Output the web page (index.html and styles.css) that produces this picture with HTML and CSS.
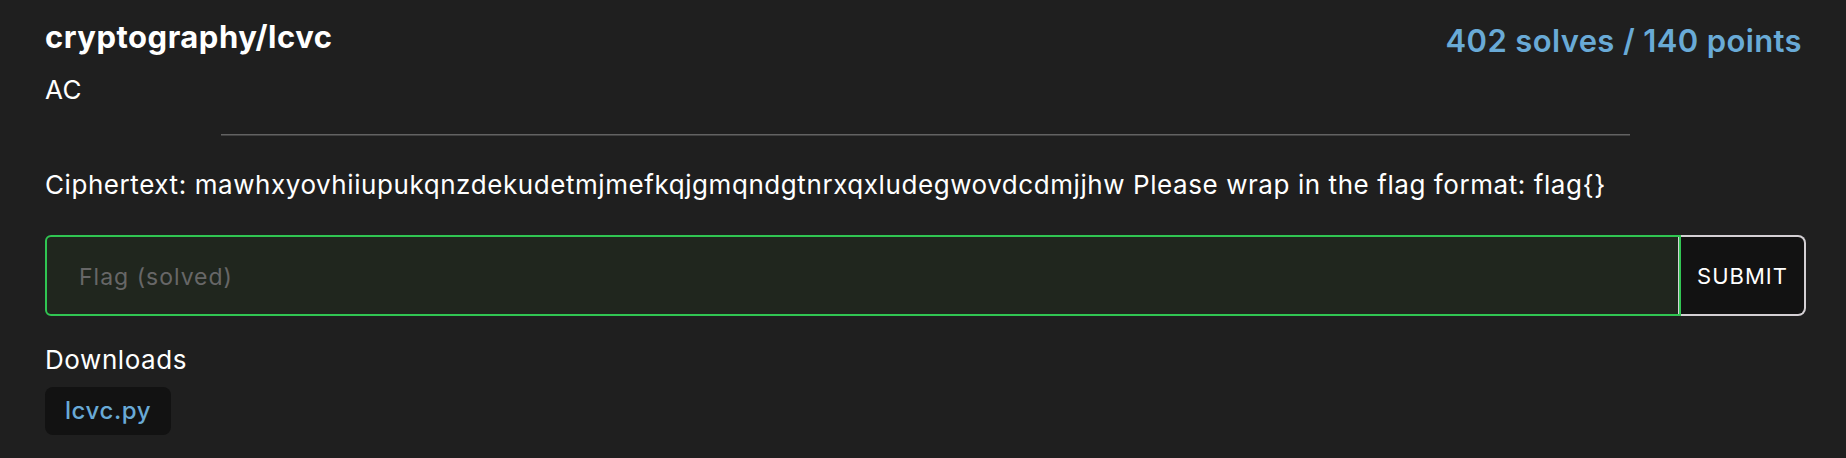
FILE: index.html
```html
<!DOCTYPE html>
<html lang="en">
<head>
<meta charset="utf-8">
<title>cryptography/lcvc</title>
<link rel="stylesheet" href="styles.css">
</head>
<body>
<main class="problem">
  <header class="header">
    <div>
      <h1 class="title">cryptography/lcvc</h1>
      <p class="author">AC</p>
    </div>
    <a class="points" href="#solves">402 solves / 140 points</a>
  </header>
  <hr class="divider">
  <p class="description">Ciphertext: mawhxyovhiiupukqnzdekudetmjmefkqjgmqndgtnrxqxludegwovdcdmjjhw Please wrap in the flag format: flag{}</p>
  <form class="flag-form">
    <input class="flag-input" type="text" aria-label="Flag" placeholder="Flag (solved)">
    <button class="submit" type="button">SUBMIT</button>
  </form>
  <section>
    <h2 class="downloads-title">Downloads</h2>
    <a class="file" href="#lcvc.py">lcvc.py</a>
  </section>
</main>
</body>
</html>
```
FILE: styles.css
```css
* { box-sizing: border-box; }
body {
  margin: 0;
  background: #1f1f1f;
  color: #fff;
  font-family: Inter, sans-serif;
  font-size: 26px;
  letter-spacing: 0.022em;
  line-height: 40px;
}
.problem { padding: 18px 40px 22px 45px; }
.header { display: flex; justify-content: space-between; align-items: flex-start; }
.title { margin: 0; font-size: 31px; font-weight: 700; line-height: 38px; letter-spacing: 0.016em; }
.author { margin: 14px 0 0; }
.points { margin: 3px 4px 0 0; color: #69aad6; font-size: 31px; font-weight: 600; letter-spacing: 0.012em; text-decoration: none; }
.divider { width: 80%; height: 2px; margin: 24px auto 29px; border: 0; border-top: 1px solid #626262; background: #414141; }
.description { margin: 0; }
.flag-form { display: flex; height: 81px; margin: 30px 0 24px; }
.flag-input {
  flex: 1;
  min-width: 0;
  padding: 2px 32px 0;
  border: 2px solid #30c552;
  border-radius: 6px 0 0 6px;
  background: #20261e;
  box-shadow: inset -1px 0 #d4d0d4;
  color: #fff;
  font: inherit;
  font-size: 23px;
  letter-spacing: 1px;
}
.flag-input::placeholder { color: #676767; opacity: 1; }
.submit {
  width: 125px;
  padding: 0;
  border: 2px solid #d4d0d4;
  border-left: 0;
  border-radius: 0 8px 8px 0;
  background: #121212;
  color: #fff;
  font: inherit;
  font-size: 22px;
  letter-spacing: 1px;
}
.downloads-title { margin: 0 0 7px; font-size: 26px; font-weight: 400; }
.file {
  display: inline-block;
  padding: 4px 20px;
  border-radius: 8px;
  background: #121212;
  color: #69aad6;
  font-size: 24px;
  font-weight: 500;
  text-decoration: none;
}
```
